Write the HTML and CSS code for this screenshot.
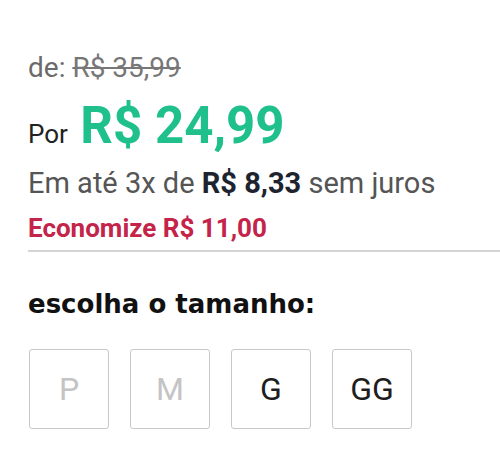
FILE: index.html
```html
<!DOCTYPE html>
<html lang="pt-BR">
<head>
    <meta charset="UTF-8">
    <meta name="viewport" content="width=device-width, initial-scale=1.0">
    <title>Produto</title>
    <link rel="stylesheet" href="styles.css">
</head>
<body>
    <div class="product-price">
        <p class="old-price">de: <s>R$ 35,99</s></p>
        <p class="price">Por <span class="price-value">R$ 24,99</span></p>
        <p class="installments">Em até 3x de <strong>R$ 8,33</strong> sem juros</p>
        <p class="savings">Economize R$ 11,00</p>
    </div>
    <div class="sizes">
        <h3>escolha o tamanho:</h3>
        <div class="size-list">
            <button type="button" class="size unavailable">P</button>
            <button type="button" class="size unavailable">M</button>
            <button type="button" class="size">G</button>
            <button type="button" class="size">GG</button>
        </div>
    </div>
</body>
</html>
```

FILE: styles.css
```css
body {
    font-family: Roboto, Arial, sans-serif;
    background-color: #fff;
    margin: 0;
    padding: 0 0 0 28px;
    color: #333;
}
p {
    margin: 0;
}
.product-price {
    padding-top: 52px;
    padding-bottom: 7px;
    border-bottom: 2px solid #d4d4d4;
}
.old-price {
    font-size: 28px;
    color: #6b6b6b;
    line-height: 32px;
}
.old-price s {
    color: #777;
}
.price {
    font-size: 26px;
    color: #222;
    line-height: 56px;
    margin-top: 14px;
}
.price-value {
    margin-left: 6px;
    font-size: 51px;
    font-weight: 700;
    color: #1fc08c;
}
.installments {
    font-size: 29px;
    color: #555;
    line-height: 32px;
    margin-top: 5px;
}
.installments strong {
    color: #1d2430;
}
.savings {
    font-size: 26px;
    font-weight: 700;
    color: #c4234a;
    line-height: 30px;
    margin-top: 14px;
}
.sizes h3 {
    font-family: "DejaVu Sans", sans-serif;
    font-size: 26px;
    font-weight: 700;
    line-height: 30px;
    color: #111;
    margin: 37px 0 30px;
}
.size-list {
    display: flex;
    gap: 21px;
    padding-left: 1px;
}
.size {
    width: 80px;
    height: 80px;
    background: #fff;
    border: 1px solid #c8c8c8;
    border-radius: 3px;
    font-family: Roboto, Arial, sans-serif;
    font-size: 32px;
    color: #1e1e1e;
    cursor: pointer;
}
.size.unavailable {
    color: #c4c4c4;
}
```
